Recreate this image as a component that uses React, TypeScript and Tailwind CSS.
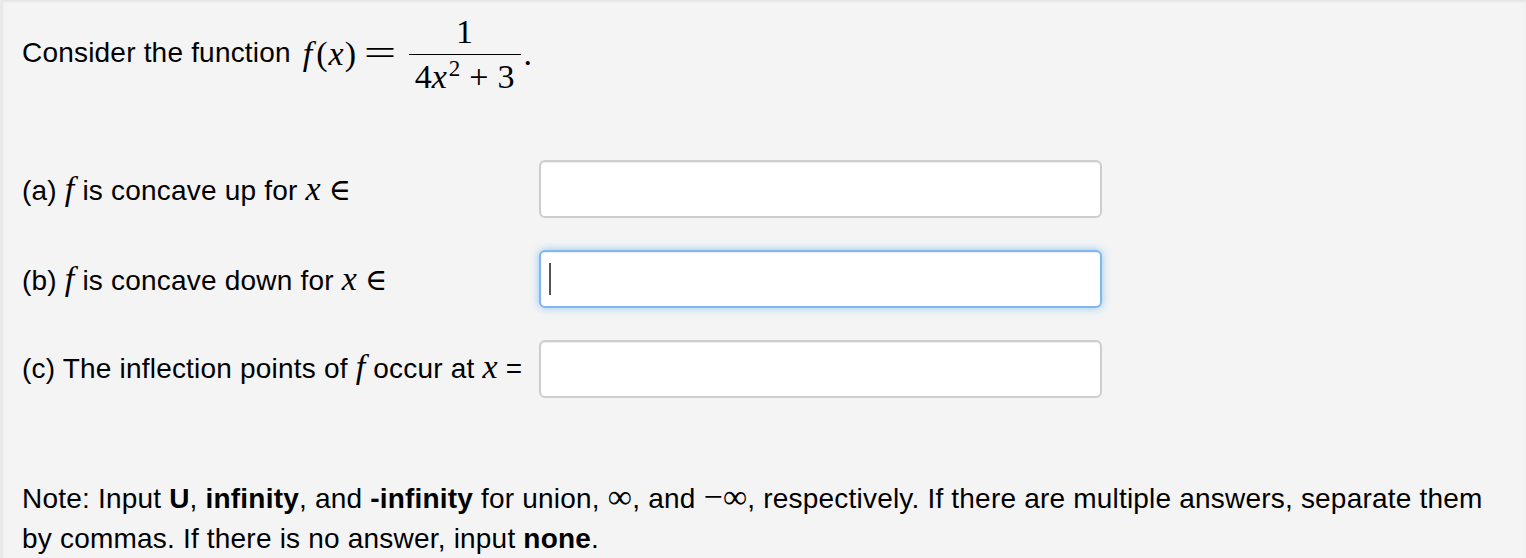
const sans = "font-['Liberation_Sans',Arial,sans-serif]";
const math = "font-['Liberation_Serif','DejaVu_Serif',serif]";

function MathVar({ children }: { children: string }) {
  return <span className={`${math} italic text-[34px] leading-none`}>{children}</span>;
}

function AnswerBox({ focused = false }: { focused?: boolean }) {
  return (
    <div
      className={
        focused
          ? "flex h-[58px] w-[563px] shrink-0 items-center rounded-[6px] border-2 border-[#82b6ee] bg-white px-[8px] shadow-[inset_0_1px_1px_rgba(0,0,0,0.075),0_0_8px_rgba(82,168,236,0.6)]"
          : "flex h-[58px] w-[563px] shrink-0 items-center rounded-[6px] border-2 border-[#cdcdcd] bg-white px-[8px] shadow-[inset_0_1px_1px_rgba(0,0,0,0.075)]"
      }
    >
      {focused ? <span className="h-[32px] w-[2px] bg-[#555]" /> : null}
    </div>
  );
}

function Row({ children, focused }: { children: React.ReactNode; focused?: boolean }) {
  return (
    <div className="flex h-[58px] items-center">
      <div className="w-[517px] text-[28px] tracking-[0.2px] whitespace-nowrap">{children}</div>
      <AnswerBox focused={focused} />
    </div>
  );
}

export default function App() {
  return (
    <div
      className={`${sans} h-[558px] overflow-hidden border-l-[3px] border-[#e9e9e9] bg-[#f4f4f4] pl-[19px] text-black shadow-[inset_0_2px_2px_rgba(0,0,0,0.06)]`}
    >
      <div className="flex h-[106px] items-center text-[28px] tracking-[0.2px]">
        <span>Consider the function</span>
        <span className={`${math} ml-[12px] text-[34px] tracking-normal`}>
          <i>f</i>
          <span className="ml-[4px]">(</span>
          <i className="mx-[1px]">x</i>)
        </span>
        <span className={`${math} mx-[14px] inline-block scale-x-[1.6] text-[36px]`}>=</span>
        <span className={`${math} ml-[4px] inline-flex flex-col items-center text-[34px] tracking-normal`}>
          <span className="mt-[2px] leading-[40px]">1</span>
          <span className="mt-[2px] h-[1px] w-[112px] bg-black" />
          <span className="mt-[2px] leading-[40px]">
            4<i>x</i>
            <sup className="ml-[2px] text-[23px]">2</sup>
            <span className="mx-[9px]">+</span>3
          </span>
        </span>
        <span className={`${math} ml-[3px] text-[34px]`}>.</span>
      </div>

      <div className="mt-[54px] flex flex-col gap-[32px]">
        <Row>
          (a) <MathVar>f</MathVar> is concave up for <MathVar>x</MathVar>{" "}
          <span className={`${math} text-[30px]`}>∈</span>
        </Row>
        <Row focused>
          (b) <MathVar>f</MathVar> is concave down for <MathVar>x</MathVar>{" "}
          <span className={`${math} text-[30px]`}>∈</span>
        </Row>
        <Row>
          (c) The inflection points of <MathVar>f</MathVar> occur at <MathVar>x</MathVar> =
        </Row>
      </div>

      <p className="mt-[81px] text-[28px] leading-[40px] tracking-[0.2px] whitespace-nowrap">
        Note: Input <b>U</b>, <b>infinity</b>, and <b>-infinity</b> for union,{" "}
        <span className={`${math} text-[34px] leading-none`}>∞</span>, and{" "}
        <span className={`${math} text-[34px] leading-none`}>−∞</span>, respectively. If there are
        multiple answers, separate them
        <br />
        by commas. If there is no answer, input <b>none</b>.
      </p>
    </div>
  );
}
